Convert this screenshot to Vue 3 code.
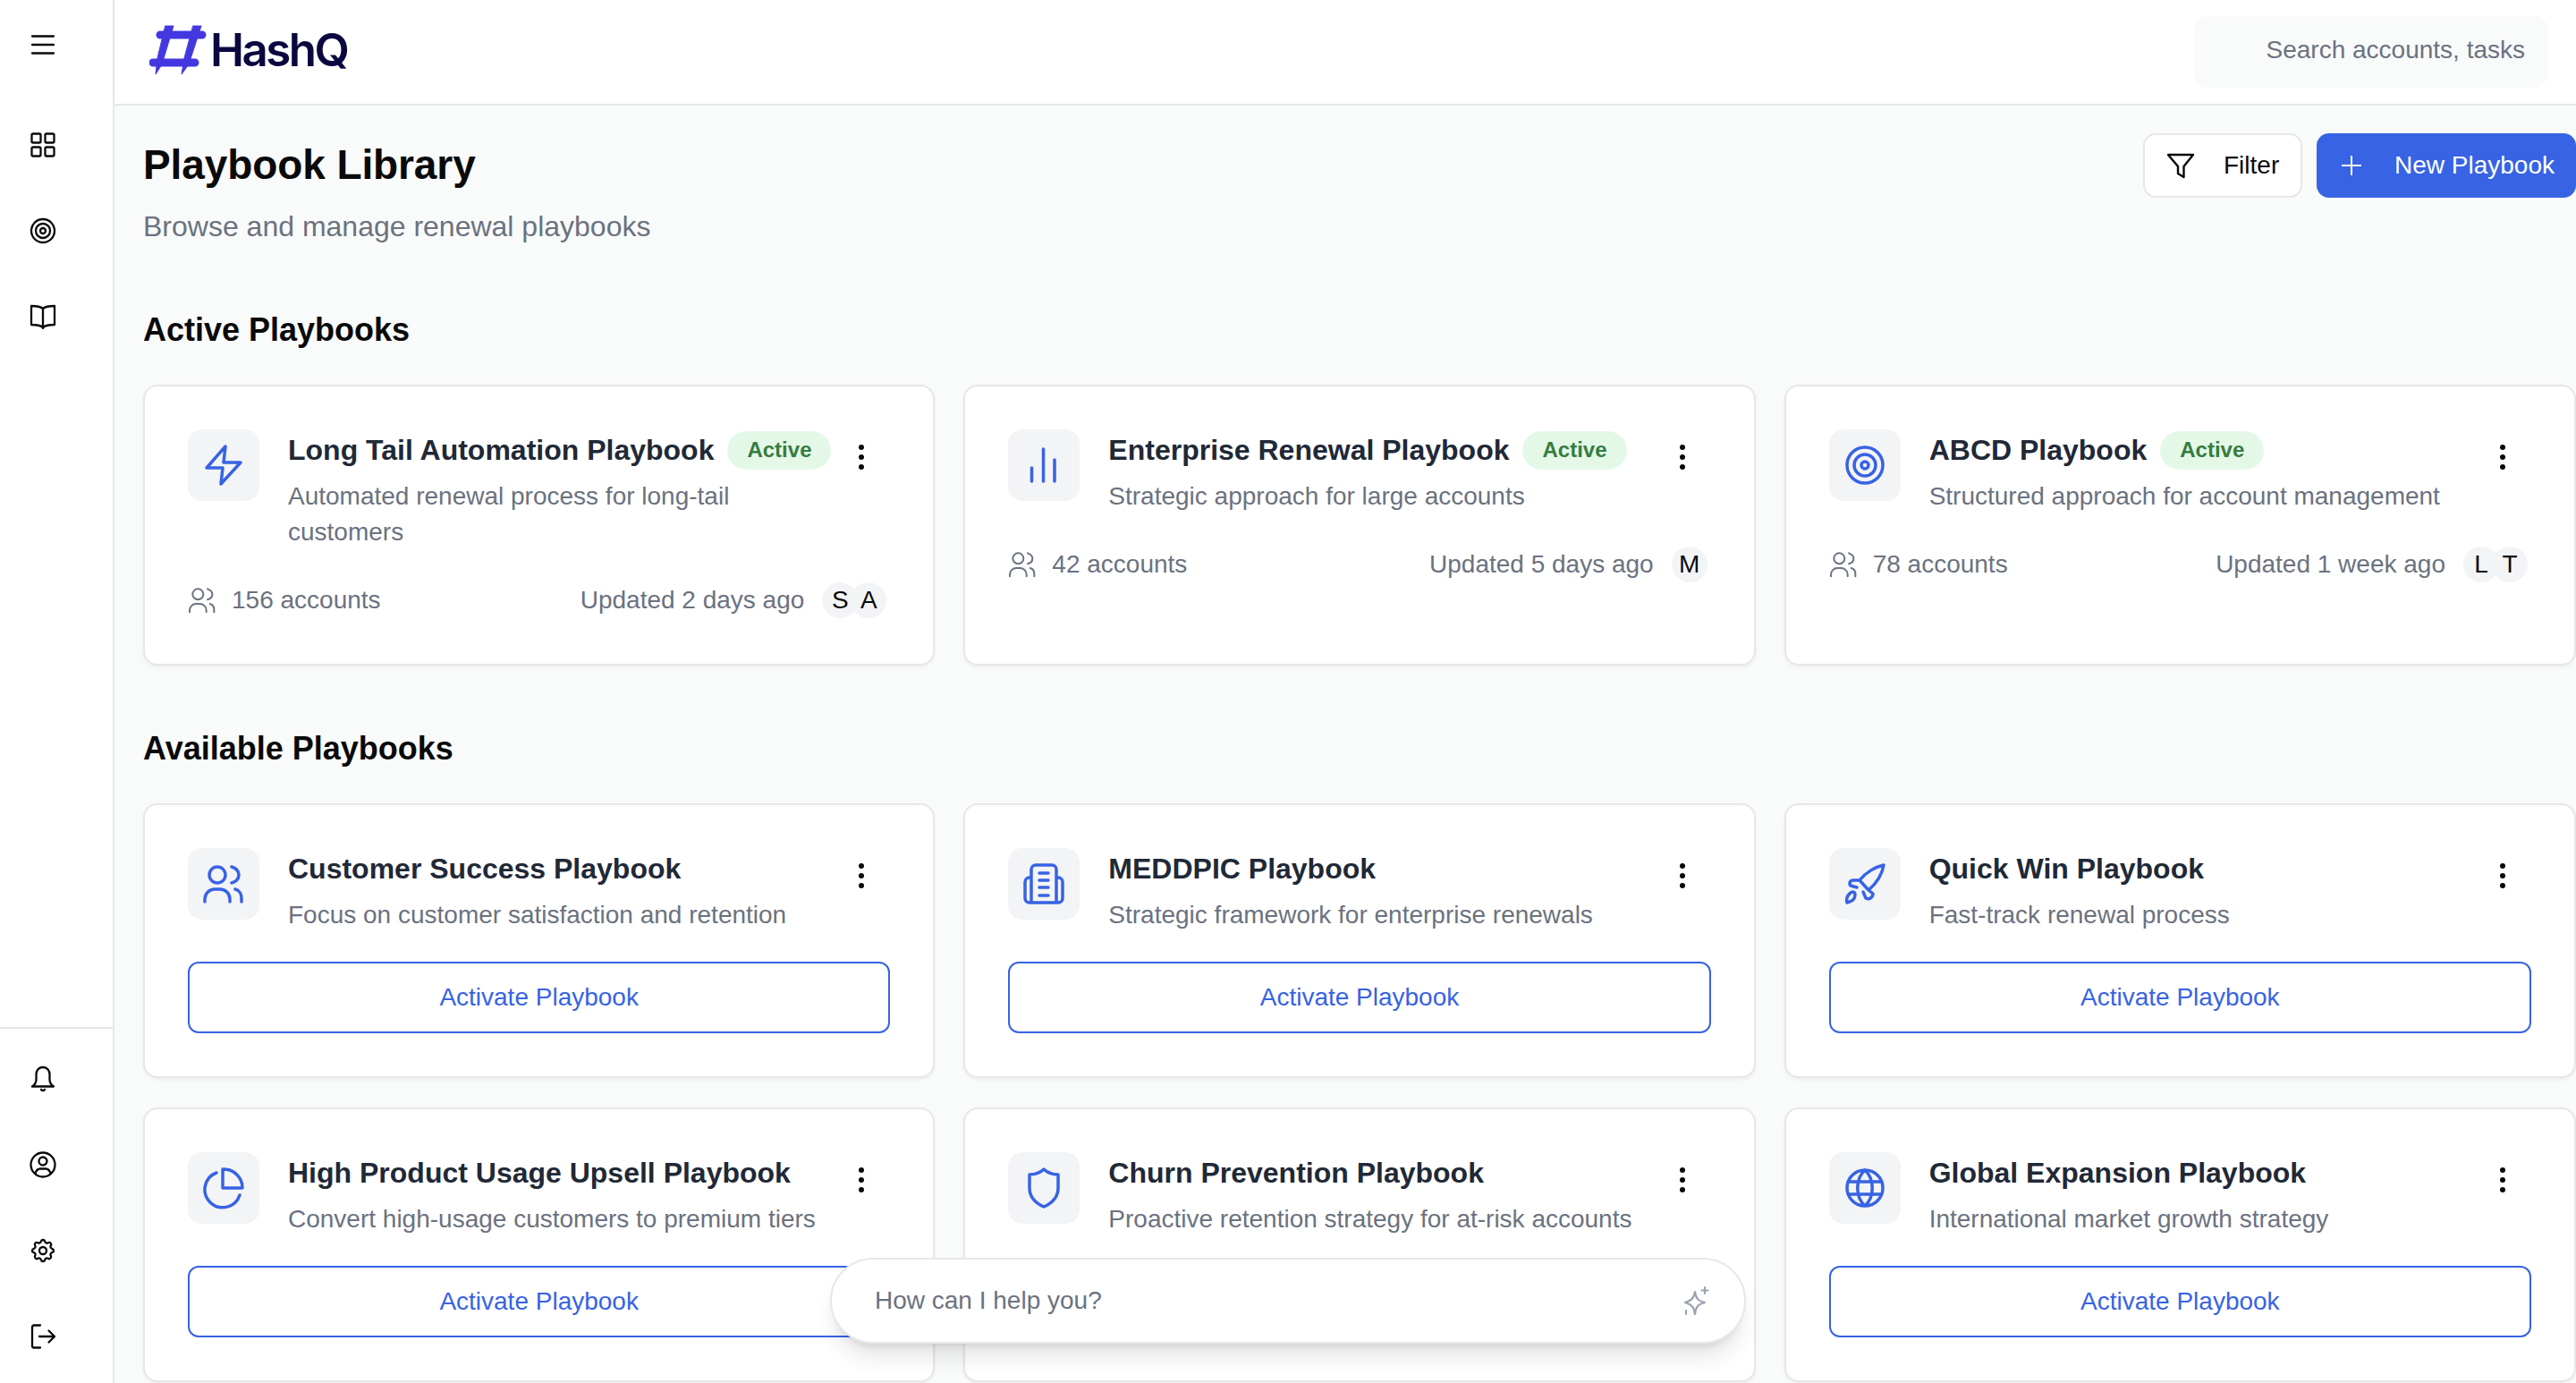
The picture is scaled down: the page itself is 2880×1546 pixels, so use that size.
<template>
  <div class="app">
    <aside class="sidebar">
      <button class="side-btn burger">
        <svg width="32" height="32" viewBox="0 0 32 32" class="side-icon"><path d="M4 6.500H28M4 16H28M4 25.500H28" /></svg>
      </button>
      <nav class="side-nav">
        <button v-for="item in topNav" :key="item" class="side-btn">
          <svg width="32" height="32" viewBox="0 0 32 32" class="side-icon"><path :d="sideIcons[item]" /></svg>
        </button>
      </nav>
      <div class="side-bottom">
        <button v-for="item in bottomNav" :key="item" class="side-btn">
          <svg width="32" height="32" viewBox="0 0 32 32" class="side-icon"><path :d="sideIcons[item]" /></svg>
        </button>
      </div>
    </aside>

    <div class="main">
      <header class="topbar">
        <div class="logo">
          <svg width="64" height="56" viewBox="0 0 64 56" class="logo-mark">
            <path d="M12 11H59M4 42H51" />
            <path class="logo-fill" d="M18 1H27L14 44L7 55L9 37Z" />
            <path class="logo-fill" d="M49 1H58L44 44L36 55L39 37Z" />
          </svg>
          <span class="logo-text">HashQ</span>
        </div>
        <div class="search">Search accounts, tasks</div>
      </header>

      <main class="page">
        <div class="page-head">
          <div>
            <h1 class="page-title">Playbook Library</h1>
            <p class="page-sub">Browse and manage renewal playbooks</p>
          </div>
          <div class="page-actions">
            <button class="btn btn-filter">
              <svg width="32" height="32" viewBox="0 0 32 32" class="filter-icon"><path d="M2 4H30L19.500 17V29L13 25V17Z" /></svg>
              Filter
            </button>
            <button class="btn btn-new">
              <svg width="24" height="24" viewBox="0 0 24 24" class="plus-icon"><path d="M12 1V23M1 12H23" /></svg>
              New Playbook
            </button>
          </div>
        </div>

        <h2 class="section-title">Active Playbooks</h2>
        <div class="grid">
          <div v-for="card in activeCards" :key="card.title" class="card">
            <div class="card-head">
              <div class="icon-box">
                <svg width="48" height="48" viewBox="0 0 48 48" class="blue-icon"><path :d="icons[card.icon]" /></svg>
              </div>
              <div class="card-text">
                <div class="title-row">
                  <span class="card-title">{{ card.title }}</span>
                  <span class="badge">Active</span>
                </div>
                <p class="card-desc">{{ card.desc }}</p>
              </div>
              <div class="kebab"><i></i><i></i><i></i></div>
            </div>
            <div class="card-foot">
              <div class="foot-left">
                <svg width="32" height="32" viewBox="0 0 48 48" class="gray-icon"><path :d="icons.users" /></svg>
                <span>{{ card.accounts }} accounts</span>
              </div>
              <div class="foot-right">
                <span>{{ card.updated }}</span>
                <div class="avatars">
                  <span v-for="a in card.people" :key="a" class="avatar">{{ a }}</span>
                </div>
              </div>
            </div>
          </div>
        </div>

        <h2 class="section-title section-two">Available Playbooks</h2>
        <div class="grid grid-available">
          <div v-for="card in availableCards" :key="card.title" class="card">
            <div class="card-head">
              <div class="icon-box">
                <svg width="48" height="48" viewBox="0 0 48 48" class="blue-icon"><path :d="icons[card.icon]" /></svg>
              </div>
              <div class="card-text">
                <div class="title-row">
                  <span class="card-title">{{ card.title }}</span>
                </div>
                <p class="card-desc">{{ card.desc }}</p>
              </div>
              <div class="kebab"><i></i><i></i><i></i></div>
            </div>
            <button class="activate">Activate Playbook</button>
          </div>
        </div>
      </main>
    </div>

    <div class="chat">
      <span>How can I help you?</span>
      <svg width="34" height="34" viewBox="0 0 34 34" class="spark-icon">
        <path d="M16 7C17 14 19 17 27 19C19 21 17 24 16 32C15 24 12 21 5 19C12 17 15 14 16 7Z" />
        <path d="M27 2V9M23.500 5.500H30.500M6 28V32" />
      </svg>
    </div>
  </div>
</template>

<script setup>
const topNav = ['grid', 'target', 'book']
const bottomNav = ['bell', 'user', 'gear', 'logout']

const sideIcons = {
  grid: 'M5 3.500H12A1.500 1.500 0 0 1 13.500 5V12A1.500 1.500 0 0 1 12 13.500H5A1.500 1.500 0 0 1 3.500 12V5A1.500 1.500 0 0 1 5 3.500ZM20 3.500H27A1.500 1.500 0 0 1 28.500 5V12A1.500 1.500 0 0 1 27 13.500H20A1.500 1.500 0 0 1 18.500 12V5A1.500 1.500 0 0 1 20 3.500ZM5 18.500H12A1.500 1.500 0 0 1 13.500 20V27A1.500 1.500 0 0 1 12 28.500H5A1.500 1.500 0 0 1 3.500 27V20A1.500 1.500 0 0 1 5 18.500ZM20 18.500H27A1.500 1.500 0 0 1 28.500 20V27A1.500 1.500 0 0 1 27 28.500H20A1.500 1.500 0 0 1 18.500 27V20A1.500 1.500 0 0 1 20 18.500Z',
  target: 'M3 16A13 13 0 1 0 29 16A13 13 0 1 0 3 16ZM8 16A8 8 0 1 0 24 16A8 8 0 1 0 8 16ZM13 16A3 3 0 1 0 19 16A3 3 0 1 0 13 16Z',
  book: 'M16 7V29M16 7C13 4.500 8 4 3 4V25C8 25 13 25.500 16 28C19 25.500 24 25 29 25V4C24 4 19 4.500 16 7Z',
  bell: 'M16 3C11 3 8.500 7 8.500 11V17C8.500 20 7 22.500 4 24.500H28C25 22.500 23.500 20 23.500 17V11C23.500 7 21 3 16 3ZM14 28C15 29.500 17 29.500 18 28',
  user: 'M2.500 16A13.500 13.500 0 1 0 29.500 16A13.500 13.500 0 1 0 2.500 16ZM11.500 12A4.500 4.500 0 1 0 20.500 12A4.500 4.500 0 1 0 11.500 12ZM7.500 26C8.500 22 10.500 20.500 13 20.500H19C21.500 20.500 23.500 22 24.500 26',
  gear: 'M13.800 5.800C14.400 3.400 17.700 3.400 18.200 5.800A2.300 2.300 0 0 0 21.700 7.200C23.700 6 26.100 8.300 24.800 10.300A2.300 2.300 0 0 0 26.200 13.800C28.600 14.400 28.600 17.700 26.200 18.200A2.300 2.300 0 0 0 24.800 21.700C26.100 23.700 23.700 26.100 21.700 24.800A2.300 2.300 0 0 0 18.200 26.200C17.700 28.600 14.400 28.600 13.800 26.200A2.300 2.300 0 0 0 10.300 24.800C8.300 26.100 6 23.700 7.200 21.700A2.300 2.300 0 0 0 5.800 18.200C3.400 17.700 3.400 14.400 5.800 13.800A2.300 2.300 0 0 0 7.200 10.300C6 8.300 8.300 6 10.300 7.200C11.600 8 13.400 7.300 13.800 5.800ZM12 16A4 4 0 1 0 20 16A4 4 0 1 0 12 16Z',
  logout: 'M13 3.500H6A2 2 0 0 0 4 5.500V26.500A2 2 0 0 0 6 28.500H13M12 16H29M22.500 9.500L29 16L22.500 22.500',
}

const icons = {
  bolt: 'M26 3L24 21H43L21 45L23 27H5Z',
  bars: 'M10.500 27V42M23.500 6V42M36 18V42',
  target: 'M4 24A20 20 0 1 0 44 24A20 20 0 1 0 4 24ZM12 24A12 12 0 1 0 36 24A12 12 0 1 0 12 24ZM20 24A4 4 0 1 0 28 24A4 4 0 1 0 20 24Z',
  users: 'M8 14A9 9 0 1 0 26 14A9 9 0 1 0 8 14ZM33 5C39 7 41 11 41 14C41 18 38 22 33 23M3 44V41A11 11 0 0 1 14 30H20A11 11 0 0 1 31 41V44M37 30C41 31 44 35 44 40V44',
  building: 'M10 17H8A5 5 0 0 0 3 22V40A5 5 0 0 0 8 45H40A5 5 0 0 0 45 40V22A5 5 0 0 0 40 17H38M10 45V8A5 5 0 0 1 15 3H33A5 5 0 0 1 38 8V45M19 12H29M19 20H29M19 28H29M19 37H29',
  rocket: 'M45 3C36 5 25 11 18 20L28 31C35 25 43 15 45 3ZM18 20H11C7 20 6 24 8 26L15 28M28 31L33 35C33 39 29 42 25 40L22 33M8 34C4 37 3 41 4 45C9 44 13 41 13 36C13 33 10 32 8 34Z',
  pie: 'M23 3A21 21 0 0 1 45 24H23ZM16 7A20 20 0 1 0 42 32',
  shield: 'M24 3C28 7 34 9 40 9V24C40 34 33 41 24 45C15 41 8 34 8 24V9C14 9 20 7 24 3Z',
  globe: 'M4 24A20 20 0 1 0 44 24A20 20 0 1 0 4 24ZM6 17H42M6 31H42M24 4C13 14 13 34 24 44M24 4C35 14 35 34 24 44',
}

const activeCards = [
  { title: 'Long Tail Automation Playbook', desc: 'Automated renewal process for long-tail customers', icon: 'bolt', accounts: 156, updated: 'Updated 2 days ago', people: ['S', 'A'] },
  { title: 'Enterprise Renewal Playbook', desc: 'Strategic approach for large accounts', icon: 'bars', accounts: 42, updated: 'Updated 5 days ago', people: ['M'] },
  { title: 'ABCD Playbook', desc: 'Structured approach for account management', icon: 'target', accounts: 78, updated: 'Updated 1 week ago', people: ['L', 'T'] },
]

const availableCards = [
  { title: 'Customer Success Playbook', desc: 'Focus on customer satisfaction and retention', icon: 'users' },
  { title: 'MEDDPIC Playbook', desc: 'Strategic framework for enterprise renewals', icon: 'building' },
  { title: 'Quick Win Playbook', desc: 'Fast-track renewal process', icon: 'rocket' },
  { title: 'High Product Usage Upsell Playbook', desc: 'Convert high-usage customers to premium tiers', icon: 'pie' },
  { title: 'Churn Prevention Playbook', desc: 'Proactive retention strategy for at-risk accounts', icon: 'shield' },
  { title: 'Global Expansion Playbook', desc: 'International market growth strategy', icon: 'globe' },
]
</script>

<style scoped>
.app {
  display: flex;
  height: 100vh;
  overflow: hidden;
  position: relative;
  font-family: "Liberation Sans", Arial, sans-serif;
  background: #f9fafa;
  color: #0a0a0a;
}

button {
  font-family: inherit;
  background: none;
  border: 0;
  padding: 0;
}

/* sidebar */
.sidebar {
  width: 128px;
  flex-shrink: 0;
  box-sizing: border-box;
  display: flex;
  flex-direction: column;
  background: #fff;
  border-right: 2px solid #e5e7eb;
}

.side-btn {
  display: flex;
  align-items: center;
  justify-content: center;
  width: 96px;
  height: 96px;
}

.burger {
  margin-top: 2px;
}

.side-nav {
  margin-top: 16px;
}

.side-bottom {
  margin-top: auto;
  padding: 8px 0 4px;
  border-top: 2px solid #e5e7eb;
}

.side-icon {
  fill: none;
  stroke: #0a0a0a;
  stroke-width: 2.300;
  stroke-linecap: round;
  stroke-linejoin: round;
}

/* header */
.main {
  flex: 1;
  min-width: 0;
  display: flex;
  flex-direction: column;
}

.topbar {
  height: 118px;
  flex-shrink: 0;
  box-sizing: border-box;
  display: flex;
  align-items: center;
  justify-content: space-between;
  background: #fff;
  border-bottom: 2px solid #e5e7eb;
  padding: 0 31px 0 39px;
}

.logo {
  display: flex;
  align-items: center;
  gap: 4px;
  padding-bottom: 5px;
}

.logo-mark {
  fill: none;
  stroke: #4338e0;
  stroke-width: 9;
  stroke-linecap: round;
}

.logo-fill {
  fill: #4338e0;
  stroke-width: 1;
  stroke-linejoin: round;
}

.logo-text {
  font-family: Inter, sans-serif;
  font-size: 51px;
  font-weight: 600;
  letter-spacing: -2.500px;
  color: #0b0840;
}

.search {
  width: 396px;
  height: 80px;
  box-sizing: border-box;
  display: flex;
  align-items: center;
  justify-content: flex-end;
  padding: 0 26px 5px 0;
  border-radius: 16px;
  background: #f9fafa;
  color: #6b7280;
  font-size: 28px;
}

/* page */
.page {
  flex: 1;
  padding: 31px 0 0 32px;
}

.page-head {
  display: flex;
  justify-content: space-between;
  align-items: flex-start;
  margin-bottom: 69px;
}

.page-title {
  margin: 0;
  font-size: 46px;
  line-height: 70px;
  font-weight: 700;
  letter-spacing: -0.100px;
}

.page-sub {
  margin: 14px 0 0;
  font-size: 32px;
  line-height: 40px;
  color: #6b7280;
}

.page-actions {
  display: flex;
  gap: 16px;
}

.btn {
  height: 72px;
  box-sizing: border-box;
  display: flex;
  align-items: center;
  font-size: 28px;
  border-radius: 14px;
}

.btn-filter {
  width: 178px;
  padding-left: 24px;
  gap: 32px;
  background: #fff;
  border: 2px solid #e5e7eb;
  color: #0a0a0a;
}

.filter-icon {
  fill: none;
  stroke: #0a0a0a;
  stroke-width: 2.400;
  stroke-linejoin: round;
}

.btn-new {
  padding: 0 24px 0 27px;
  gap: 36px;
  background: #3763e4;
  color: #fff;
}

.plus-icon {
  fill: none;
  stroke: #fff;
  stroke-width: 2;
}

.section-title {
  margin: 0 0 34px;
  font-size: 36px;
  line-height: 54px;
  font-weight: 700;
}

.section-two {
  margin-top: 66px;
}

.grid {
  display: grid;
  grid-template-columns: repeat(3, 1fr);
  gap: 32px;
}

.grid-available {
  row-gap: 33px;
}

.card {
  box-sizing: border-box;
  padding: 48px;
  background: #fff;
  border: 2px solid #e5e7eb;
  border-radius: 16px;
  box-shadow: 0 2px 4px rgba(0, 0, 0, 0.05);
}

.card-head {
  display: flex;
  gap: 32px;
}

.icon-box {
  width: 80px;
  height: 80px;
  flex-shrink: 0;
  display: flex;
  align-items: center;
  justify-content: center;
  border-radius: 16px;
  background: #f3f4f6;
}

.blue-icon {
  fill: none;
  stroke: #3763e4;
  stroke-width: 3.500;
  stroke-linecap: round;
  stroke-linejoin: round;
}

.gray-icon {
  fill: none;
  stroke: #6b7280;
  stroke-width: 3;
  stroke-linecap: round;
  stroke-linejoin: round;
}

.card-text {
  flex: 1;
  min-width: 0;
}

.title-row {
  display: flex;
  align-items: center;
  gap: 15px;
  height: 46px;
}

.card-title {
  font-size: 32px;
  font-weight: 700;
  color: #1f2937;
  white-space: nowrap;
}

.badge {
  height: 43px;
  padding: 0 22px;
  display: flex;
  align-items: center;
  border-radius: 22px;
  background: #e4f8e8;
  color: #367c3f;
  font-size: 24px;
  font-weight: 700;
}

.card-desc {
  margin: 9px 0 0;
  font-size: 28px;
  line-height: 40px;
  color: #6b7280;
}

.kebab {
  width: 32px;
  height: 61px;
  flex-shrink: 0;
  margin-left: -32px;
  margin-right: 16px;
  display: flex;
  flex-direction: column;
  align-items: center;
  justify-content: center;
  gap: 5px;
}

.kebab i {
  width: 6px;
  height: 6px;
  border-radius: 50%;
  background: #0a0a0a;
}

.card-foot {
  height: 46px;
  margin-top: 33px;
  display: flex;
  align-items: center;
  justify-content: space-between;
  font-size: 28px;
  color: #6b7280;
}

.foot-left {
  display: flex;
  align-items: center;
  gap: 17px;
}

.foot-right {
  display: flex;
  align-items: center;
  gap: 20px;
  padding-right: 4px;
}

.avatars {
  display: flex;
}

.avatar {
  width: 40px;
  height: 40px;
  display: flex;
  align-items: center;
  justify-content: center;
  border-radius: 50%;
  background: #f3f4f6;
  color: #0a0a0a;
  font-size: 28px;
}

.avatar + .avatar {
  margin-left: -8px;
}

.activate {
  display: block;
  width: 100%;
  height: 80px;
  margin-top: 32px;
  border: 2px solid #3763e4;
  border-radius: 12px;
  color: #3763e4;
  font-size: 28px;
}

/* chat box floats over the cards */
.chat {
  position: absolute;
  left: 928px;
  bottom: 44px;
  width: 1024px;
  height: 96px;
  box-sizing: border-box;
  display: flex;
  align-items: center;
  justify-content: space-between;
  padding: 0 37px 0 48px;
  background: #fff;
  border: 2px solid #e5e7eb;
  border-radius: 48px;
  box-shadow: 0 20px 25px -5px rgba(0, 0, 0, 0.1), 0 8px 10px -6px rgba(0, 0, 0, 0.1);
  color: #6b7280;
  font-size: 28px;
}

.spark-icon {
  fill: none;
  stroke: #9ca3af;
  stroke-width: 2.200;
  stroke-linecap: round;
  stroke-linejoin: round;
}
</style>
